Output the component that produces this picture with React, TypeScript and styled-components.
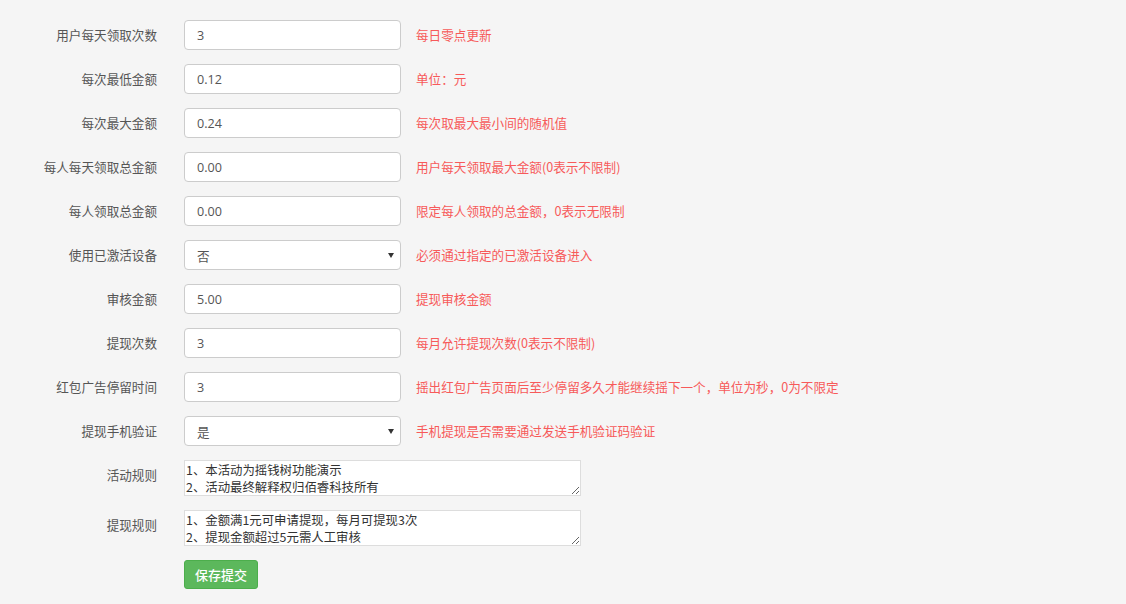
import React from "react";
import styled, { createGlobalStyle } from "styled-components";

const Global = createGlobalStyle`
  html, body { margin: 0; padding: 0; background: #f5f5f5; }
  body { font-family: "Open Sans", "Noto Sans CJK SC", sans-serif; font-size: 13px; color: #555; }
`;

const Form = styled.form`
  display: flex;
  flex-direction: column;
  gap: 14px;
  padding: 20px 0 14px 0;
  width: 1126px;
  box-sizing: border-box;
`;

const Row = styled.div`
  display: flex;
  align-items: flex-start;
`;

const Label = styled.label`
  width: 157px;
  box-sizing: border-box;
  padding-top: 5px;
  line-height: 20px;
  text-align: right;
  margin-right: 27px;
  color: #555;
  font-family: "Noto Sans CJK SC", sans-serif;
  font-size: 12.6px;
  flex-shrink: 0;
`;

const Input = styled.input`
  width: 217px;
  height: 30px;
  box-sizing: border-box;
  border: 1px solid #ccc;
  border-radius: 4px;
  background: #fff;
  padding: 0 12px;
  font-family: "Open Sans", "Noto Sans CJK SC", sans-serif;
  font-size: 12.6px;
  color: #555;
  outline: none;
`;

const SelectWrap = styled.div`
  position: relative;
  width: 217px;
  height: 30px;
`;

const Select = styled.select`
  appearance: none;
  -webkit-appearance: none;
  width: 217px;
  height: 30px;
  box-sizing: border-box;
  border: 1px solid #ccc;
  border-radius: 4px;
  background: #fff;
  padding: 0 12px;
  font-family: "Noto Sans CJK SC", sans-serif;
  font-size: 12.6px;
  color: #555;
  outline: none;
`;

const Caret = styled.span`
  position: absolute;
  right: 7px;
  top: 13px;
  width: 0;
  height: 0;
  border-left: 3px solid transparent;
  border-right: 3px solid transparent;
  border-top: 5px solid #333;
  pointer-events: none;
`;

const Help = styled.span`
  margin-left: 15px;
  padding-top: 5px;
  line-height: 20px;
  color: #f75a5a;
  font-family: "Noto Sans CJK SC", sans-serif;
  font-size: 12.6px;
  white-space: nowrap;
`;

const TextArea = styled.textarea`
  width: 397px;
  height: 36px;
  box-sizing: border-box;
  border: 1px solid #ddd;
  background: #fff;
  padding: 1px 1px 0;
  margin: 0;
  font-family: "Noto Sans CJK SC", sans-serif;
  font-size: 12.4px;
  line-height: 17px;
  color: #333;
  outline: none;
  overflow: hidden;
`;

const Button = styled.button`
  margin-left: 184px;
  width: 74px;
  height: 29px;
  border: 1px solid #4cae4c;
  border-radius: 3px;
  background: #5cb85c;
  color: #fff;
  font-family: "Noto Sans CJK SC", sans-serif;
  font-size: 13px;
  font-weight: 500;
  padding: 0;
  cursor: pointer;
`;

type Field =
  | { kind: "input"; label: string; value: string; help: string }
  | { kind: "select"; label: string; value: string; options: string[]; help: string };

const fields: Field[] = [
  { kind: "input", label: "用户每天领取次数", value: "3", help: "每日零点更新" },
  { kind: "input", label: "每次最低金额", value: "0.12", help: "单位：元" },
  { kind: "input", label: "每次最大金额", value: "0.24", help: "每次取最大最小间的随机值" },
  { kind: "input", label: "每人每天领取总金额", value: "0.00", help: "用户每天领取最大金额(0表示不限制)" },
  { kind: "input", label: "每人领取总金额", value: "0.00", help: "限定每人领取的总金额，0表示无限制" },
  { kind: "select", label: "使用已激活设备", value: "否", options: ["否", "是"], help: "必须通过指定的已激活设备进入" },
  { kind: "input", label: "审核金额", value: "5.00", help: "提现审核金额" },
  { kind: "input", label: "提现次数", value: "3", help: "每月允许提现次数(0表示不限制)" },
  { kind: "input", label: "红包广告停留时间", value: "3", help: "摇出红包广告页面后至少停留多久才能继续摇下一个，单位为秒，0为不限定" },
  { kind: "select", label: "提现手机验证", value: "是", options: ["是", "否"], help: "手机提现是否需要通过发送手机验证码验证" },
];

const rules = [
  { label: "活动规则", value: "1、本活动为摇钱树功能演示\n2、活动最终解释权归佰睿科技所有" },
  { label: "提现规则", value: "1、金额满1元可申请提现，每月可提现3次\n2、提现金额超过5元需人工审核" },
];

export default function App() {
  return (
    <>
      <Global />
      <Form onSubmit={(e) => e.preventDefault()}>
        {fields.map((f) => (
          <Row key={f.label}>
            <Label>{f.label}</Label>
            {f.kind === "input" ? (
              <Input defaultValue={f.value} />
            ) : (
              <SelectWrap>
                <Select defaultValue={f.value}>
                  {f.options.map((o) => (
                    <option key={o}>{o}</option>
                  ))}
                </Select>
                <Caret />
              </SelectWrap>
            )}
            <Help>{f.help}</Help>
          </Row>
        ))}
        {rules.map((r) => (
          <Row key={r.label}>
            <Label>{r.label}</Label>
            <TextArea defaultValue={r.value} />
          </Row>
        ))}
        <Button type="submit">保存提交</Button>
      </Form>
    </>
  );
}
